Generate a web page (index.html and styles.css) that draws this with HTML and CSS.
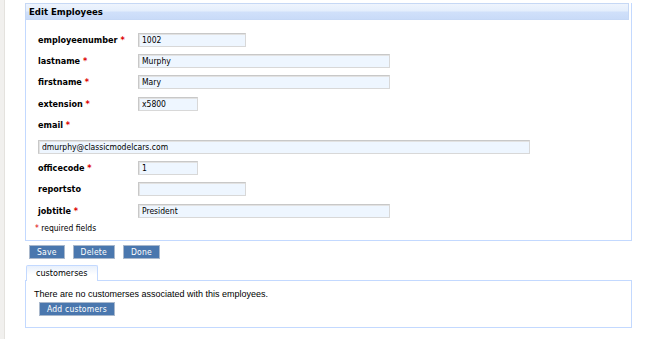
FILE: index.html
```html
<!DOCTYPE html>
<html>
<head>
<meta charset="utf-8">
<link rel="stylesheet" href="styles.css">
</head>
<body>
<div class="page">
  <div class="strip"></div>
  <div class="main">
    <div class="panel">
      <div class="panel-head">Edit Employees</div>
      <div class="form">
        <div class="row"><label class="lbl">employeenumber <span class="req">*</span></label><input class="in w108" value="1002"></div>
        <div class="row"><label class="lbl">lastname <span class="req">*</span></label><input class="in w252" value="Murphy"></div>
        <div class="row"><label class="lbl">firstname <span class="req">*</span></label><input class="in w252" value="Mary"></div>
        <div class="row"><label class="lbl">extension <span class="req">*</span></label><input class="in w60" value="x5800"></div>
        <div class="row"><label class="lbl">email <span class="req">*</span></label></div>
        <div class="row"><input class="in w492" value="dmurphy@classicmodelcars.com"></div>
        <div class="row"><label class="lbl">officecode <span class="req">*</span></label><input class="in w60" value="1"></div>
        <div class="row"><label class="lbl">reportsto</label><input class="in w108" value=""></div>
        <div class="row"><label class="lbl">jobtitle <span class="req">*</span></label><input class="in w252" value="President"></div>
        <div class="note"><span class="req">*</span> required fields</div>
      </div>
    </div>
    <div class="buttons">
      <button class="btn">Save</button>
      <button class="btn">Delete</button>
      <button class="btn">Done</button>
    </div>
    <div class="tabs"><span class="tab">customerses</span></div>
    <div class="tabpanel">
      <div class="msg">There are no customerses associated with this employees.</div>
      <button class="btn add">Add customers</button>
    </div>
  </div>
</div>
</body>
</html>
```
FILE: styles.css
```css
html, body {
  margin: 0;
  padding: 0;
  background: #fff;
}
body {
  font-family: "DejaVu Sans Condensed", "DejaVu Sans", sans-serif;
  font-size: 9px;
  color: #000;
}
.page {
  display: flex;
  height: 339px;
}
.strip {
  width: 4px;
  background: #f1f0ee;
  border-right: 1px solid #e4e2de;
  flex: none;
}
.main {
  margin-left: 20px;
  width: 607px;
  padding-top: 3px;
}
.panel {
  border: 1px solid #c3d9ff;
  border-top: none;
}
.panel-head {
  height: 15px;
  line-height: 15px;
  margin: 0 2px 0 -1px;
  padding-left: 3px;
  font-weight: bold;
  font-size: 9.5px;
  border: 1px solid #c6d8f5;
  background: linear-gradient(#eef4fd 0%, #e4eefc 45%, #d0e0fa 55%, #c9dbf8 100%);
}
.form {
  padding: 9px 0 6px 12px;
}
.row {
  display: flex;
  align-items: center;
  height: 21.4px;
}
.lbl {
  width: 100px;
  font-weight: bold;
  font-size: 9px;
}
.req {
  color: #d00;
}
.in {
  box-sizing: border-box;
  height: 14px;
  border: 1px solid #c8c8c8;
  border-right-color: #d8d8d8;
  border-bottom-color: #d8d8d8;
  box-shadow: inset 1px 1px 0 #e2e2e2;
  background: #eef6ff;
  font-family: inherit;
  font-size: 8.5px;
  padding: 0 3px;
  color: #000;
}
.w108 { width: 108px; }
.w252 { width: 252px; }
.w60 { width: 60px; }
.w492 { width: 492px; }
.note {
  margin-left: -3px;
  font-size: 8.5px;
  height: 12px;
  line-height: 12px;
}
.buttons {
  display: flex;
  gap: 8px;
  padding: 4px 0 0 4px;
}
.btn {
  height: 14px;
  padding: 0 7px;
  background: #4a77ae;
  color: #fff;
  border: 1px solid #a9b8cc;
  font-family: inherit;
  font-size: 8.5px;
  letter-spacing: 0.2px;
  line-height: 12px;
}
.tabs {
  display: flex;
  padding: 6px 0 0 1px;
}
.tab {
  display: block;
  height: 15px;
  line-height: 15px;
  padding: 0 9px;
  border: 1px solid #c3d9ff;
  border-bottom: none;
  border-radius: 2px 2px 0 0;
  background: linear-gradient(#e8f0fc, #fff 60%);
  font-size: 9px;
  margin-bottom: -1px;
  position: relative;
  background-color: #fff;
}
.tabpanel {
  border: 1px solid #c3d9ff;
  padding: 8px 0 0 8px;
  box-sizing: border-box;
  height: 48px;
}
.msg {
  font-family: "Liberation Sans", Arial, sans-serif;
  font-size: 9px;
  height: 11px;
  line-height: 11px;
}
.add {
  margin: 2px 0 0 5px;
}
```
